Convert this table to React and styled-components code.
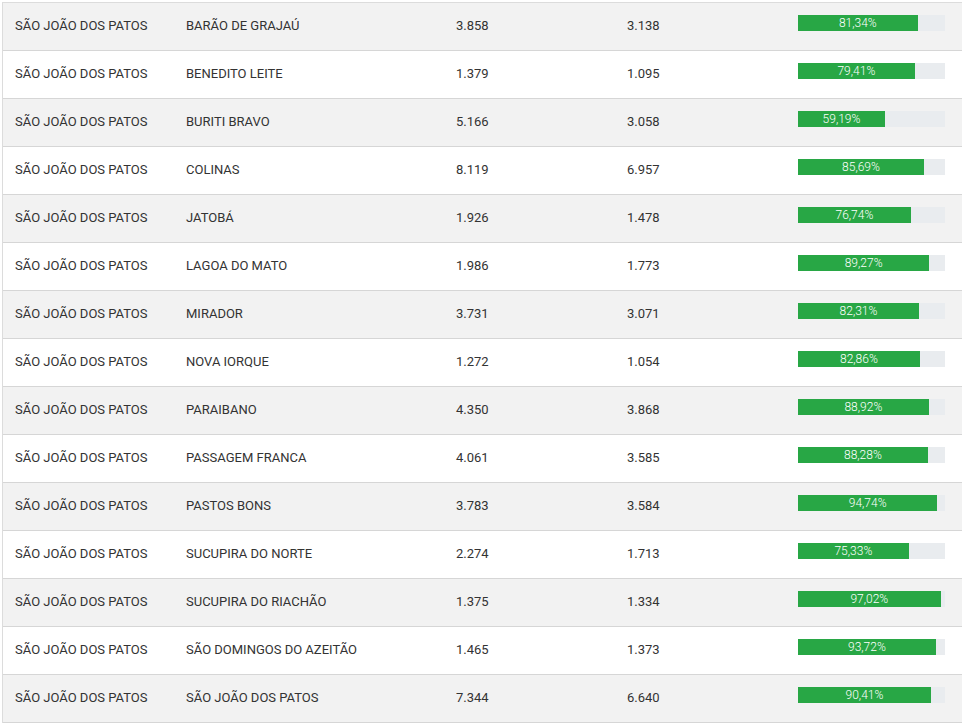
import styled, { createGlobalStyle } from "styled-components";

const GlobalStyle = createGlobalStyle`
    body {
        margin: 0;
        background: #fff;
        font-family: Roboto, "Liberation Sans", Arial, sans-serif;
    }
`
const Wrapper = styled.div`
    padding: 2px 0 0 2px;
    overflow: hidden;
`
const Table = styled.div`
    border-left: 1px solid #dcdcdc;
    border-top: 1px solid #dcdcdc;
    width: 1000px;
`
const Row = styled.div`
    box-sizing: border-box;
    display: grid;
    grid-template-columns: 171px 270px 171px 171px 176px;
    height: 48px;
    padding-bottom: 2px;
    align-items: center;
    border-bottom: 1px solid #d6d6d6;
    background: ${props => props.$striped ? "#f2f2f2" : "#ffffff"};
`
const Cell = styled.div`
    padding: 0 12px;
    font-size: 13px;
    color: #333;
    white-space: nowrap;
`
const Track = styled.div`
    width: 147px;
    height: 16px;
    background: #e9ecef;
    display: flex;
    margin-top: -5px;
`
const Fill = styled.div`
    height: 100%;
    background: #28a745;
    color: #fff;
    font-size: 12px;
    font-weight: 300;
    line-height: 16px;
    text-align: center;
    white-space: nowrap;
`

const rows = [
    ["BARÃO DE GRAJAÚ", "3.858", "3.138", 81.34],
    ["BENEDITO LEITE", "1.379", "1.095", 79.41],
    ["BURITI BRAVO", "5.166", "3.058", 59.19],
    ["COLINAS", "8.119", "6.957", 85.69],
    ["JATOBÁ", "1.926", "1.478", 76.74],
    ["LAGOA DO MATO", "1.986", "1.773", 89.27],
    ["MIRADOR", "3.731", "3.071", 82.31],
    ["NOVA IORQUE", "1.272", "1.054", 82.86],
    ["PARAIBANO", "4.350", "3.868", 88.92],
    ["PASSAGEM FRANCA", "4.061", "3.585", 88.28],
    ["PASTOS BONS", "3.783", "3.584", 94.74],
    ["SUCUPIRA DO NORTE", "2.274", "1.713", 75.33],
    ["SUCUPIRA DO RIACHÃO", "1.375", "1.334", 97.02],
    ["SÃO DOMINGOS DO AZEITÃO", "1.465", "1.373", 93.72],
    ["SÃO JOÃO DOS PATOS", "7.344", "6.640", 90.41],
];

export default function App() {
    return (
        <>
            <GlobalStyle />
            <Wrapper>
                <Table>
                    {rows.map(([city, total, done, pct], i) => (
                        <Row key={city} $striped={i % 2 === 0}>
                            <Cell>SÃO JOÃO DOS PATOS</Cell>
                            <Cell>{city}</Cell>
                            <Cell>{total}</Cell>
                            <Cell>{done}</Cell>
                            <Cell>
                                <Track>
                                    <Fill style={{ width: pct + "%" }}>
                                        {pct.toFixed(2).replace(".", ",")}%
                                    </Fill>
                                </Track>
                            </Cell>
                        </Row>
                    ))}
                </Table>
            </Wrapper>
        </>
    )
}
